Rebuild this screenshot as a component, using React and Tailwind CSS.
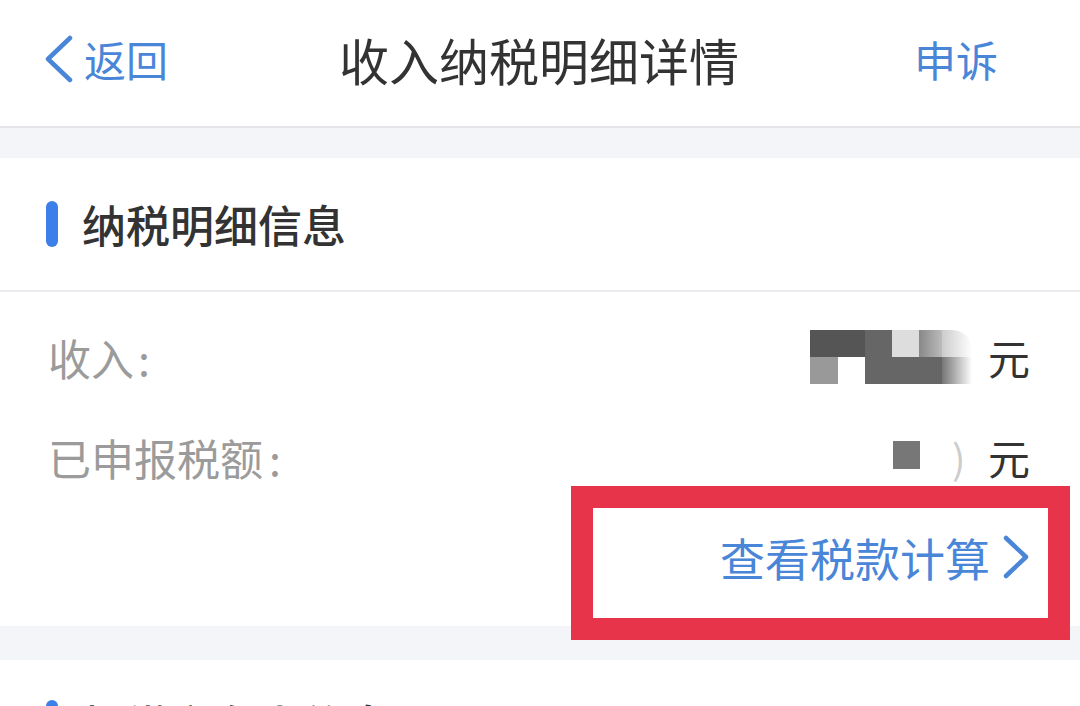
export default function App() {
  return (
    <div
      className="relative w-[1080px] h-[706px] overflow-hidden bg-[#f4f5f8]"
      style={{ fontFamily: '"Noto Sans CJK SC", "Noto Sans", sans-serif' }}
    >
      {/* Top nav */}
      <header className="h-[128px] bg-white border-b-2 border-[#e4e6ea] grid grid-cols-[1fr_auto_1fr] items-center pl-[44px] pr-[82px] pb-[8px]">
        <div className="flex items-center gap-[10px] text-[#4a86d8]">
          <svg width="30" height="48" viewBox="0 0 30 48" fill="none">
            <path d="M26 3 L4 24 L26 45" stroke="#4a86d8" strokeWidth="4.5" strokeLinecap="round" strokeLinejoin="round" />
          </svg>
          <span className="text-[42px] leading-none">返回</span>
        </div>
        <h1 className="text-[50px] leading-none text-[#333] pl-[36px]">收入纳税明细详情</h1>
        <span className="text-[42px] leading-none text-[#4a86d8] justify-self-end">申诉</span>
      </header>

      {/* Card */}
      <section className="mt-[30px] bg-white">
        <div className="h-[134px] border-b-2 border-[#e9ebee] flex items-center pl-[46px] gap-[24px]">
          <div className="w-[12px] h-[46px] rounded-full bg-[#3d7fe8]" />
          <h2 className="text-[44px] leading-none font-medium text-[#333]">纳税明细信息</h2>
        </div>

        <div className="pl-[48px] pr-[50px] pt-[15px] pb-[19px]">
          <div className="h-[100px] flex items-center justify-between">
            <span className="text-[43px] text-[#9b9b9b] leading-none">
              收入<span className="ml-[4px]">:</span>
            </span>
            <div className="flex items-center">
              <div className="grid grid-cols-[28px_27px_27px_27px_23px_30px] grid-rows-[27px_27px]">
                <div className="bg-[#555]" />
                <div className="bg-[#555]" />
                <div className="bg-[#666] row-span-2" />
                <div className="bg-[#ddd]" />
                <div className="bg-gradient-to-r from-[#888] to-[#bbb]" />
                <div className="bg-gradient-to-r from-[#ccc] to-white rounded-tr-[20px]" />
                <div className="bg-[#999]" />
                <div className="bg-white" />
                <div className="bg-[#666] col-span-2" />
                <div className="bg-gradient-to-r from-[#777] to-white" />
              </div>
              <span className="text-[42px] leading-none text-[#333] ml-[16px]">元</span>
            </div>
          </div>

          <div className="h-[100px] flex items-center justify-between">
            <span className="text-[43px] text-[#9b9b9b] leading-none">
              已申报税额<span className="ml-[6px]">:</span>
            </span>
            <div className="flex items-center">
              <div className="w-[27px] h-[28px] bg-[#777] mb-[4px]" />
              <span className="text-[40px] leading-none text-[#ccc] ml-[32px] w-[20px]">)</span>
              <span className="text-[42px] leading-none text-[#333] ml-[16px]">元</span>
            </div>
          </div>

          <div className="h-[100px] flex items-center justify-end gap-[12px] text-[#4a86d8]">
            <span className="text-[45px] leading-none">查看税款计算</span>
            <svg width="28" height="44" viewBox="0 0 28 44" fill="none">
              <path d="M4 3 L24 22 L4 41" stroke="#4a86d8" strokeWidth="4.5" strokeLinecap="round" strokeLinejoin="round" />
            </svg>
          </div>
        </div>
      </section>

      {/* Next card, cut off by the viewport */}
      <section className="mt-[34px] bg-white h-[200px] pt-[40px] pl-[46px]">
        <div className="flex items-start gap-[24px]">
          <div className="w-[12px] h-[46px] rounded-full bg-[#3d7fe8]" />
          <h2 className="text-[44px] leading-none font-medium text-[#333] pt-[2px]">扣缴义务人信息</h2>
        </div>
      </section>

      {/* Red annotation box */}
      <div className="absolute left-[571px] top-[486px] w-[499px] h-[154px] border-[22px] border-[#e8344a]" />
    </div>
  );
}
